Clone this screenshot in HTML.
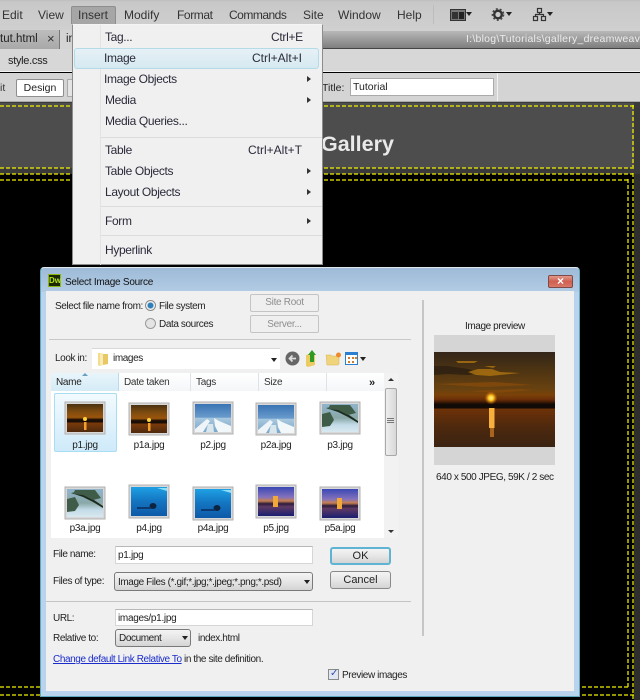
<!DOCTYPE html>
<html><head><meta charset="utf-8"><style>
html,body{margin:0;padding:0;background:#000}
#p{position:relative;width:640px;height:700px;overflow:hidden;background:#000;font-family:"Liberation Sans",sans-serif;font-size:11px;color:#222}
#p div,#p span.t{position:absolute;box-sizing:border-box}
.t{white-space:nowrap;line-height:14px}
.m{font-size:12px;color:#333}
.mi{font-size:12px;color:#2a2a3a;letter-spacing:-.35px}
.sc{font-size:12px;color:#2a2a3a}
.d{font-size:10px;color:#222;letter-spacing:-.4px;margin-top:1px}
.dash-h{height:2px;opacity:.62;background:repeating-linear-gradient(90deg,#f2f200 0 4px,transparent 4px 6px)}
.dash-v{width:2px;opacity:.62;background:repeating-linear-gradient(180deg,#f2f200 0 4px,transparent 4px 6px)}
.btn{border:1px solid #8a8a8a;border-radius:3px;background:linear-gradient(#f4f4f4,#e6e6e6 50%,#d4d4d4);text-align:center;font-size:10px;letter-spacing:-.4px;color:#222}
.dis{border:1px solid #c4c4c4;border-radius:2px;background:#efefef;text-align:center;font-size:10px;letter-spacing:-.3px;color:#8d8d8d}
.inp{background:#fff;border:1px solid #d6d6d6;border-top-color:#b8b8b8;font-size:10px;letter-spacing:-.3px}
.hd{top:373px;height:18px;background:linear-gradient(#fff,#f4f6f8);border-right:1px solid #dfe3e8;font-size:10px;letter-spacing:-.3px;line-height:19px;padding-left:5px;color:#333}
.lb{font-size:10px;letter-spacing:-.3px;color:#222;text-align:center;width:62px;margin-top:1px}
.arr{width:0;height:0;border-top:3px solid transparent;border-bottom:3px solid transparent;border-left:4px solid #333}
.dn{width:0;height:0;border-left:3.5px solid transparent;border-right:3.5px solid transparent;border-top:4px solid #222}
svg{position:absolute;overflow:hidden}
</style></head><body><div id="p">

<!-- top bars -->
<div style="left:0;top:0;width:640px;height:31px;background:linear-gradient(#bdbdbd 0,#c8c8c8 2px,#d0d0d0)"></div>
<span class="t m" style="left:2px;top:8px">Edit</span>
<span class="t m" style="left:38px;top:8px">View</span>
<div style="left:71px;top:6px;width:45px;height:18px;background:#a6a6a6;border:1px solid #8e8e8e;border-bottom:0;border-radius:2px 2px 0 0"></div>
<span class="t m" style="left:78px;top:8px">Insert</span>
<span class="t m" style="left:124px;top:8px">Modify</span>
<span class="t m" style="left:177px;top:8px;letter-spacing:-.4px">Format</span>
<span class="t m" style="left:229px;top:8px;letter-spacing:-.5px">Commands</span>
<span class="t m" style="left:303px;top:8px">Site</span>
<span class="t m" style="left:338px;top:8px">Window</span>
<span class="t m" style="left:397px;top:8px">Help</span>
<div style="left:433px;top:5px;width:1px;height:19px;background:#bcbcbc"></div>
<svg style="left:448px;top:6px" width="90" height="18" viewBox="0 0 90 18">
<rect x="2.500" y="3.500" width="15" height="11" fill="#777" stroke="#333"/><rect x="4" y="6" width="6" height="7" fill="#333"/><rect x="11" y="6" width="5" height="7" fill="#222"/>
<path d="M18 6h6l-3 4z" fill="#222"/>
<circle cx="50" cy="8.500" r="3.800" fill="none" stroke="#333" stroke-width="2.400"/><circle cx="50" cy="8.500" r="5.600" fill="none" stroke="#444" stroke-width="1.500" stroke-dasharray="2 2"/>
<path d="M58 6h6l-3 4z" fill="#222"/>
</svg>
<svg style="left:532px;top:6px" width="36" height="18" viewBox="0 0 36 18"><g fill="none" stroke="#333" stroke-width="1.200"><rect x="5.500" y="2.500" width="4" height="4"/><rect x="1.500" y="10.500" width="4" height="4"/><rect x="9.500" y="10.500" width="4" height="4"/><path d="M7.500 6.500v2M3.500 10.500v-2h8v2"/></g><path d="M15 6h6l-3 4z" fill="#222"/></svg>

<div style="left:0;top:31px;width:640px;height:18px;background:linear-gradient(#b8b8b8,#7e7e7e);border-bottom:1px solid #444"></div>
<div style="left:0;top:30px;width:60px;height:19px;background:linear-gradient(#bdbdbd,#a8a8a8);border-right:1px solid #777"></div>
<div style="left:60px;top:30px;width:20px;height:19px;background:#d4d4d4"></div>
<span class="t" style="left:0;top:32px;font-size:11.500px;color:#222">tut.html</span>
<span class="t" style="left:47px;top:32px;font-size:13px;color:#333">×</span>
<span class="t" style="left:66px;top:32px;font-size:11.500px;color:#222">in</span>
<span class="t" style="left:466px;top:32px;font-size:10.500px;letter-spacing:.25px;color:#ececec">I:\blog\Tutorials\gallery_dreamweav</span>

<div style="left:0;top:49px;width:640px;height:23px;background:#d7d7d7;border-bottom:1px solid #f2f2f2"></div>
<span class="t" style="left:8px;top:54px;font-size:11px;letter-spacing:-.3px;color:#222">style.css</span>
<div style="left:0;top:73px;width:640px;height:29px;background:#d4d4d4;border-bottom:1px solid #aaa"></div>
<span class="t" style="left:0;top:81px;font-size:10.500px;color:#333">it</span>
<div style="left:16px;top:79px;width:48px;height:18px;background:#fff;border:1px solid #8e8e8e;border-radius:2px;text-align:center;font-size:10.500px;line-height:16px;color:#222">Design</div>
<div style="left:67px;top:79px;width:8px;height:18px;background:#e4e4e4;border:1px solid #aaa"></div>
<span class="t" style="left:322px;top:81px;font-size:10.500px;color:#222">Title:</span>
<div class="inp" style="left:350px;top:78px;width:144px;height:18px;border:1px solid #aaa;font-size:10.500px;letter-spacing:0;line-height:17px;padding-left:2px;color:#222">Tutorial</div>
<div style="left:497px;top:73px;width:1px;height:28px;background:#f0f0f0"></div>

<!-- doc area -->
<div style="left:0;top:102px;width:640px;height:72px;background:#3a3a3a"></div>
<div style="left:0;top:103px;width:634px;height:65px;background:#4d4d4d"></div>
<div style="left:0;top:174px;width:632px;height:526px;background:#000"></div>
<div style="left:634px;top:174px;width:6px;height:526px;background:#2e2e2e"></div>
<div class="dash-h" style="left:0;top:105px;width:634px"></div>
<div class="dash-h" style="left:0;top:167px;width:634px"></div>
<div class="dash-h" style="left:0;top:173px;width:633px"></div>
<div class="dash-h" style="left:0;top:179px;width:628px"></div>
<div class="dash-v" style="left:632px;top:105px;height:62px"></div>
<div class="dash-v" style="left:632px;top:173px;height:527px"></div>
<div class="dash-v" style="left:627px;top:179px;height:508px"></div>
<div class="dash-h" style="left:0;top:686px;width:628px"></div>
<div class="dash-h" style="left:0;top:694px;width:634px"></div>
<span class="t" style="left:321px;top:133px;font-size:21.500px;line-height:22px;font-weight:bold;color:#eaeaea">Gallery</span>

<!-- Menu -->
<div style="left:72px;top:24px;width:251px;height:241px;background:#f0f0f0;border:1px solid #8c8c8c;border-top:1px solid #f4f4f4"></div>
<div style="left:100px;top:25px;width:1px;height:240px;background:#e2e3e3"></div>
<div style="left:74px;top:48px;width:245px;height:21px;background:linear-gradient(#e6f1f6,#d6e9f1);border:1px solid #b4dbe8;border-radius:3px"></div>
<span class="t mi" style="left:105px;top:30px">Tag...</span><span class="t sc" style="left:271px;top:30px;letter-spacing:-.3px">Ctrl+E</span>
<span class="t mi" style="left:104px;top:51px">Image</span><span class="t sc" style="left:252px;top:51px">Ctrl+Alt+I</span>
<span class="t mi" style="left:104px;top:72px">Image Objects</span><div class="arr" style="left:307px;top:76px"></div>
<span class="t mi" style="left:105px;top:93px">Media</span><div class="arr" style="left:307px;top:97px"></div>
<span class="t mi" style="left:105px;top:114px">Media Queries...</span>
<div style="left:101px;top:137px;width:221px;height:1px;background:#dcdcdc"></div>
<span class="t mi" style="left:105px;top:143px">Table</span><span class="t sc" style="left:248px;top:143px;letter-spacing:0">Ctrl+Alt+T</span>
<span class="t mi" style="left:105px;top:164px">Table Objects</span><div class="arr" style="left:307px;top:168px"></div>
<span class="t mi" style="left:105px;top:185px">Layout Objects</span><div class="arr" style="left:307px;top:189px"></div>
<div style="left:101px;top:206px;width:221px;height:1px;background:#dcdcdc"></div>
<span class="t mi" style="left:105px;top:214px">Form</span><div class="arr" style="left:307px;top:218px"></div>
<div style="left:101px;top:235px;width:221px;height:1px;background:#dcdcdc"></div>
<span class="t mi" style="left:105px;top:243px">Hyperlink</span>

<!-- Dialog -->
<div style="left:40px;top:267px;width:540px;height:430px;background:#b9d3ec;border:1px solid #5fa8bf;border-top:1px solid #dfe7ef;border-radius:4px 4px 0 0"></div>
<div style="left:41px;top:268px;width:538px;height:24px;background:linear-gradient(#9dbad7,#b3cce4);border-radius:4px 4px 0 0"></div>
<div style="left:46px;top:291px;width:528px;height:400px;background:#f0f0f0"></div>
<div style="left:48px;top:274px;width:13px;height:13px;background:#1b2a05;border:1px solid #8ab80e;color:#b4e61e;font-size:8px;line-height:11px;text-align:center;font-weight:bold">Dw</div>
<span class="t" style="left:65px;top:276px;font-size:10px;letter-spacing:-.25px;color:#111">Select Image Source</span>
<div style="left:548px;top:275px;width:25px;height:13px;background:linear-gradient(#e29a8c,#cf5f50 50%,#d9786a);border:1px solid #7c4b47;border-radius:2px;text-align:center;color:#fff;font-size:12px;line-height:11px;font-weight:bold">×</div>

<span class="t d" style="left:55px;top:299px">Select file name from:</span>
<div style="left:145px;top:300px;width:11px;height:11px;border-radius:50%;background:radial-gradient(#2f7fb8 0 2.500px,#f4f4f4 3.500px);border:1px solid #8a8a8a"></div>
<span class="t d" style="left:159px;top:299px">File system</span>
<div style="left:145px;top:318px;width:11px;height:11px;border-radius:50%;background:#e4e4e4;border:1px solid #9a9a9a"></div>
<span class="t d" style="left:159px;top:317px">Data sources</span>
<div class="dis" style="left:250px;top:294px;width:69px;height:18px;line-height:16px">Site Root</div>
<div class="dis" style="left:250px;top:315px;width:69px;height:18px;line-height:17px">Server...</div>
<div style="left:49px;top:339px;width:362px;height:1px;background:#c8c8c8;border-bottom:0"></div>

<div style="left:92px;top:348px;width:188px;height:21px;background:#fff;border-top:1px solid #d8d8d8"></div>
<span class="t d" style="left:55px;top:351px">Look in:</span>
<svg style="left:96px;top:350px" width="14" height="17" viewBox="0 0 14 17"><path d="M2 3h4l1 1v11l-4 1-1-1z" fill="#f2dc8c"/><path d="M7 4h5v10l-5 1z" fill="#e8c866"/><path d="M4 3h3v12H4z" fill="#f8ecb4"/></svg>
<span class="t d" style="left:113px;top:351px">images</span>
<div class="dn" style="left:271px;top:358px"></div>
<svg style="left:284px;top:349px" width="88" height="20" viewBox="0 0 88 20">
<circle cx="8.500" cy="9.500" r="7" fill="#666"/><path d="M12 9.500H6M8.500 6.500l-3 3 3 3" stroke="#ddd" stroke-width="1.700" fill="none"/>
<path d="M22 6l3-1 6 1v10l-7 2-2-1z" fill="#eccb62"/><path d="M28 1l4 5h-2v7h-4V6h-2z" fill="#2e9a22"/>
<path d="M42 6h5l1 1h7v8l-1 1H43z" fill="#f0d47c" stroke="#d8b24e" stroke-width=".5"/><circle cx="54.500" cy="6" r="2.500" fill="#ee8a2c"/>
<rect x="61.500" y="3.500" width="12" height="12" fill="#fff" stroke="#2a7fd0"/><rect x="62" y="3" width="12" height="3" fill="#2a7fd0"/><path d="M64 8h2v2h-2zM68 8h2v2h-2zM71 8h2v2h-2zM64 12h2v2h-2zM68 12h2v2h-2z" fill="#d07a2c"/><path d="M76 8h6l-3 4z" fill="#222"/>
</svg>

<!-- list -->
<div style="left:51px;top:391px;width:333px;height:147px;background:#fff"></div>
<div class="hd" style="left:51px;width:68px;background:linear-gradient(#e9f5fb,#d4ebf6);border-right:1px solid #b8dcea;color:#222">Name</div>
<div style="left:82px;top:373px;width:0;height:0;border-left:3px solid transparent;border-right:3px solid transparent;border-bottom:3px solid #6a9ec0"></div>
<div class="hd" style="left:119px;width:72px">Date taken</div>
<div class="hd" style="left:191px;width:68px">Tags</div>
<div class="hd" style="left:259px;width:68px">Size</div>
<div class="hd" style="left:327px;width:57px;border-right:0"></div>
<span class="t" style="left:369px;top:376px;font-size:11px;font-weight:bold;color:#222">»</span>
<div style="left:384px;top:373px;width:14px;height:165px;background:#f2f2f2"></div>
<div style="left:385px;top:388px;width:12px;height:68px;background:linear-gradient(90deg,#eee,#d8d8d8);border:1px solid #a8a8a8;border-radius:2px"></div>
<div style="left:387px;top:418px;width:7px;height:6px;background:repeating-linear-gradient(#777 0 1px,transparent 1px 2px)"></div>
<div style="left:388px;top:378px;width:0;height:0;border-left:3px solid transparent;border-right:3px solid transparent;border-bottom:3px solid #333"></div>
<div style="left:388px;top:530px;width:0;height:0;border-left:3px solid transparent;border-right:3px solid transparent;border-top:3px solid #333"></div>
<div style="left:54px;top:393px;width:63px;height:59px;background:linear-gradient(#f2fafe,#cfeafa);border:1px solid #a8ddf2;border-radius:2px"></div>

<svg style="left:0;top:0" width="640" height="700" viewBox="0 0 640 700">
<defs>
<linearGradient id="sunsky" x1="0" y1="0" x2="0" y2="1"><stop offset="0" stop-color="#4a3212"/><stop offset=".25" stop-color="#7a4a10"/><stop offset=".48" stop-color="#9c560c"/><stop offset=".56" stop-color="#1a0e06"/><stop offset=".64" stop-color="#1a0e06"/><stop offset=".68" stop-color="#7a3a0a"/><stop offset="1" stop-color="#4e2a0e"/></linearGradient>
<linearGradient id="sky" x1="0" y1="0" x2="0" y2="1"><stop offset="0" stop-color="#3a74b4"/><stop offset=".48" stop-color="#6a9ccc"/><stop offset=".5" stop-color="#a8c8de"/><stop offset="1" stop-color="#7ba6c8"/></linearGradient>
<linearGradient id="blue" x1="0" y1="0" x2="0" y2="1"><stop offset="0" stop-color="#1ea0e4"/><stop offset=".5" stop-color="#1474c0"/><stop offset="1" stop-color="#0e5aa8"/></linearGradient>
<linearGradient id="dusk" x1="0" y1="0" x2="0" y2="1"><stop offset="0" stop-color="#3a48b4"/><stop offset=".35" stop-color="#8472bc"/><stop offset=".48" stop-color="#c88050"/><stop offset=".58" stop-color="#2c1c3c"/><stop offset=".68" stop-color="#5e3a64"/><stop offset="1" stop-color="#1a1e70"/></linearGradient>
<linearGradient id="tree" x1="0" y1="0" x2="0" y2="1"><stop offset="0" stop-color="#8fb4cc"/><stop offset=".5" stop-color="#8aa8a8"/><stop offset=".75" stop-color="#c4dce8"/><stop offset="1" stop-color="#d8e8f0"/></linearGradient>

<g id="t1"><rect width="40" height="32" fill="#d8d8d8" stroke="#b0b0b0"/><rect x="2" y="2" width="36" height="28" fill="url(#sunsky)"/><circle cx="20" cy="17" r="2" fill="#ffd23c"/><rect x="19" y="20" width="2.500" height="8" fill="#f2a030"/></g>
<g id="t2"><rect width="40" height="32" fill="#d8d8d8" stroke="#b0b0b0"/><rect x="2" y="2" width="36" height="28" fill="url(#sky)"/><path d="M2 27l12-10 3 2-7 11H2z" fill="#eef4f8"/><path d="M21 16l5 3 12 5v6H25l-3-6z" fill="#f2f7fa"/><path d="M15 22l5 0 1 8h-8z" fill="#d8e6ee"/></g>
<g id="t3"><rect width="40" height="32" fill="#d8d8d8" stroke="#b0b0b0"/><rect x="2" y="2" width="36" height="28" fill="url(#tree)"/><path d="M6 6l12 4 10 5 10 6v-2L26 11 12 5z" fill="#1e2c20"/><path d="M10 3h20l6 8-8 2-10-5-10-1zM2 12l8-2 4 8-4 6-8 1z" fill="#3f5c48"/></g>
<g id="t4"><rect width="40" height="33" fill="#d8d8d8" stroke="#b0b0b0"/><rect x="2" y="2" width="36" height="29" fill="url(#blue)"/><ellipse cx="24" cy="21" rx="3.500" ry="3" fill="#0c2440"/><path d="M8 23h14" stroke="#0c3a70" stroke-width="2"/><path d="M28 3h10v3z" fill="#8ee0f8"/></g>
<g id="t5"><rect width="40" height="33" fill="#d8d8d8" stroke="#b0b0b0"/><rect x="2" y="2" width="36" height="29" fill="url(#dusk)"/><rect x="17" y="11" width="5" height="11" fill="#f0a838"/></g>

<linearGradient id="pv" x1="0" y1="0" x2="0" y2="1"><stop offset="0" stop-color="#33261a"/><stop offset=".2" stop-color="#4e3412"/><stop offset=".4" stop-color="#6a4210"/><stop offset=".45" stop-color="#7b4208"/><stop offset=".5" stop-color="#6b2f08"/><stop offset=".53" stop-color="#3a1806"/><stop offset=".55" stop-color="#120a06"/><stop offset=".59" stop-color="#120a06"/><stop offset=".6" stop-color="#6d3208"/><stop offset=".8" stop-color="#4c280e"/><stop offset="1" stop-color="#3b2412"/></linearGradient>
<radialGradient id="sunr"><stop offset="0" stop-color="#fff3a0"/><stop offset=".4" stop-color="#ffc81e"/><stop offset="1" stop-color="#e06a08" stop-opacity="0"/></radialGradient>
</defs>
<use href="#t1" x="65" y="402"/><use href="#t1" x="129" y="403"/><use href="#t2" x="193" y="402"/><use href="#t2" x="256" y="403"/><use href="#t3" x="320" y="402"/>
<use href="#t3" x="65" y="487"/><use href="#t4" x="129" y="485"/><use href="#t4" x="193" y="487"/><use href="#t5" x="256" y="485"/><use href="#t5" x="320" y="487"/>

<!-- preview -->
<rect x="434" y="335" width="121" height="130" fill="#d5d5d5"/>
<rect x="434" y="352" width="121" height="95" fill="url(#pv)"/>
<path d="M434 366l14 0 20 3 12 4-12 2-20-1-14 1z" fill="#2e2012" opacity=".85"/>
<path d="M456 361h22l-4 2h-16zM468 372l10-3 14 0 8 3 20 1-30 3-14-1zM484 366h12l-3 2z" fill="#a8700f" opacity=".85"/>
<path d="M434 384l60-2 40 3-50 2zM470 391l50-2 14 1-40 3z" fill="#8a4c0a" opacity=".7"/>
<circle cx="491" cy="398" r="6.500" fill="url(#sunr)"/>
<rect x="489" y="408" width="5.500" height="20" fill="#f7b03c"/><rect x="490" y="428" width="4" height="9" fill="#a8641c"/>
</svg>

<span class="t lb" style="left:54px;top:438px">p1.jpg</span>
<span class="t lb" style="left:118px;top:438px">p1a.jpg</span>
<span class="t lb" style="left:182px;top:438px">p2.jpg</span>
<span class="t lb" style="left:245px;top:438px">p2a.jpg</span>
<span class="t lb" style="left:309px;top:438px">p3.jpg</span>
<span class="t lb" style="left:54px;top:521px">p3a.jpg</span>
<span class="t lb" style="left:118px;top:521px">p4.jpg</span>
<span class="t lb" style="left:182px;top:521px">p4a.jpg</span>
<span class="t lb" style="left:245px;top:521px">p5.jpg</span>
<span class="t lb" style="left:309px;top:521px">p5a.jpg</span>

<span class="t d" style="left:53px;top:547px">File name:</span>
<div class="inp" style="left:115px;top:546px;width:198px;height:18px;line-height:18px;padding-left:2px">p1.jpg</div>
<span class="t d" style="left:53px;top:574px">Files of type:</span>
<div class="btn" style="left:114px;top:572px;width:199px;height:19px;text-align:left;padding-left:3px;line-height:19px;border-color:#7a7a7a">Image Files (*.gif;*.jpg;*.jpeg;*.png;*.psd)</div>
<div class="dn" style="left:304px;top:580px"></div>
<div class="btn" style="left:330px;top:547px;width:61px;height:18px;line-height:15px;border:2px solid #5fb4d4;font-size:11px;letter-spacing:0">OK</div>
<div class="btn" style="left:330px;top:571px;width:61px;height:18px;line-height:16px;font-size:11px;letter-spacing:0">Cancel</div>
<div style="left:46px;top:601px;width:365px;height:1px;background:#c4c4c4"></div>
<span class="t d" style="left:53px;top:611px">URL:</span>
<div class="inp" style="left:115px;top:609px;width:198px;height:17px;line-height:17px;padding-left:2px">images/p1.jpg</div>
<span class="t d" style="left:53px;top:631px">Relative to:</span>
<div class="btn" style="left:115px;top:629px;width:76px;height:18px;text-align:left;padding-left:3px;line-height:18px;border-color:#7a7a7a">Document</div>
<div class="dn" style="left:182px;top:636px"></div>
<span class="t d" style="left:198px;top:631px">index.html</span>
<span class="t d" style="left:53px;top:652px"><span style="color:#1a2ccc;text-decoration:underline">Change default Link Relative To</span> in the site definition.</span>
<div style="left:328px;top:669px;width:11px;height:11px;background:#dfe6f4;border:1px solid #8a8a8a"></div>
<span class="t" style="left:330px;top:667px;font-size:10px;color:#3a4caa">✓</span>
<span class="t d" style="left:342px;top:668px">Preview images</span>

<div style="left:422px;top:300px;width:2px;height:336px;background:#c6c6c6"></div>
<span class="t d" style="left:465px;top:319px">Image preview</span>
<span class="t d" style="left:436px;top:470px">640 x 500 JPEG, 59K / 2 sec</span>

</div></body></html>
